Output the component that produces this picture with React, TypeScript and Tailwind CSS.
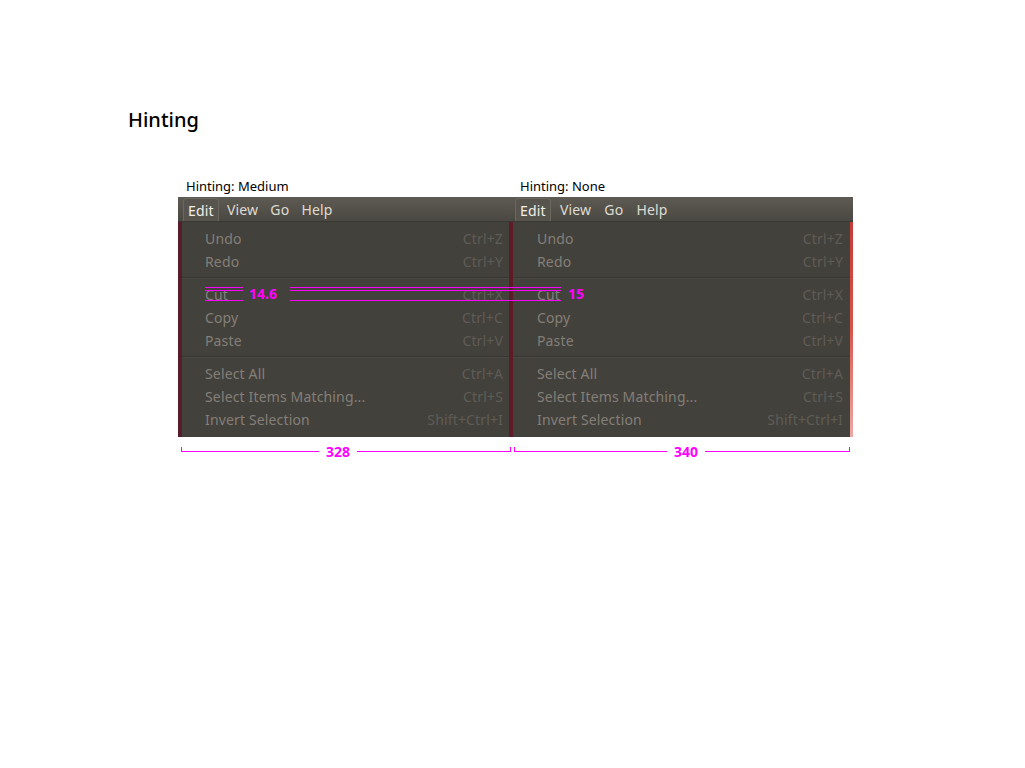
type Item = [string, string];

const groups: Item[][] = [
  [["Undo", "Ctrl+Z"], ["Redo", "Ctrl+Y"]],
  [["Cut", "Ctrl+X"], ["Copy", "Ctrl+C"], ["Paste", "Ctrl+V"]],
  [["Select All", "Ctrl+A"], ["Select Items Matching...", "Ctrl+S"], ["Invert Selection", "Shift+Ctrl+I"]],
];

function MenuBar({ pad, gap }: { pad: string; gap: string }) {
  return (
    <div className={`flex h-[25px] items-end border-b border-[#3a3934] bg-gradient-to-b from-[#5d5b53] to-[#4a4842] text-[14px] tracking-[0.2px] text-[#dfdbd2] ${pad} ${gap}`}>
      <div className="flex h-[23px] items-center rounded-t-[4px] border border-b-0 border-[#6a685f] bg-[#56544d] px-[4px] text-[#f2efe8]">Edit</div>
      <div className="flex h-[23px] items-center px-[4px]">View</div>
      <div className="flex h-[23px] items-center px-[4px]">Go</div>
      <div className="flex h-[23px] items-center px-[4px]">Help</div>
    </div>
  );
}

function Dropdown({ padL, padR }: { padL: string; padR: string }) {
  return (
    <div className="flex-1 bg-[#43413c] py-[5px] text-[14px] tracking-[0.15px]">
      {groups.map((g, gi) => (
        <div key={gi}>
          {gi > 0 && (
            <div className="flex h-[10px] flex-col justify-center">
              <div className="h-px bg-[#393733]" />
              <div className="h-px bg-[#4a4843]" />
            </div>
          )}
          {g.map(([label, key]) => (
            <div key={label} className={`flex h-[23px] items-center justify-between ${padL} ${padR}`}>
              <span className="text-[#837f78]">{label}</span>
              <span className="text-[#5f5c56]">{key}</span>
            </div>
          ))}
        </div>
      ))}
    </div>
  );
}

export default function App() {
  return (
    <div className="min-h-[768px] bg-white pl-[128px] pt-[106px] font-['Noto_Sans','DejaVu_Sans',sans-serif]">
      <h1 className="text-[20px] font-medium leading-[28px] text-black">Hinting</h1>

      <div className="ml-[50px] mt-[43px] w-[675px]">
        <div className="flex text-[13px] leading-[18px] text-black">
          <div className="w-[335px] pl-[8px]">Hinting: Medium</div>
          <div className="w-[340px] pl-[7px]">Hinting: None</div>
        </div>

        <div className="relative mt-[2px] flex">
          <div className="w-[335px]">
            <MenuBar pad="pl-[5px]" gap="gap-[4px]" />
            <div className="flex h-[215px]">
              <div className="w-[4px] bg-[#561c29]" />
              <Dropdown padL="pl-[23px]" padR="pr-[6px]" />
              <div className="w-[4px] bg-[#5e1a27]" />
            </div>
          </div>
          <div className="w-[340px]">
            <MenuBar pad="pl-[2px]" gap="gap-[5px]" />
            <div className="flex h-[215px]">
              <Dropdown padL="pl-[24px]" padR="pr-[7px]" />
              <div className="w-[3px] bg-gradient-to-b from-[#c63a35] via-[#d8544a] to-[#eba8a4]" />
            </div>
          </div>

          {/* x-height markers */}
          <div className="absolute left-[27px] top-[90px] h-px w-[38px] bg-[#ff00ff]" />
          <div className="absolute left-[27px] top-[93px] h-px w-[38px] bg-[#ff00ff]" />
          <div className="absolute left-[27px] top-[103px] h-px w-[38px] bg-[#ff00ff]" />
          <div className="absolute left-[71px] top-[88px] text-[14px] font-bold leading-[18px] text-[#ff00ff]">14.6</div>
          <div className="absolute left-[112px] top-[90px] h-px w-[271px] bg-[#ff00ff]" />
          <div className="absolute left-[112px] top-[93px] h-px w-[271px] bg-[#ff00ff]" />
          <div className="absolute left-[112px] top-[103px] h-px w-[271px] bg-[#ff00ff]" />
          <div className="absolute left-[390px] top-[88px] text-[14px] font-bold leading-[18px] text-[#ff00ff]">15</div>
        </div>

        <div className="mt-[8px] flex h-[14px] items-start text-[14px] font-bold leading-[14px] text-[#ff00ff]">
          <div className="ml-[3px] flex w-[330px] items-start">
            <div className="mt-[2px] h-[5px] w-[138px] border-b border-l border-[#ff00ff]" />
            <span className="px-[7px]">328</span>
            <div className="mt-[2px] h-[5px] flex-1 border-b border-r border-[#ff00ff]" />
          </div>
          <div className="ml-[3px] flex w-[336px] items-start">
            <div className="mt-[2px] h-[5px] w-[153px] border-b border-l border-[#ff00ff]" />
            <span className="px-[7px]">340</span>
            <div className="mt-[2px] h-[5px] flex-1 border-b border-r border-[#ff00ff]" />
          </div>
        </div>
      </div>
    </div>
  );
}
